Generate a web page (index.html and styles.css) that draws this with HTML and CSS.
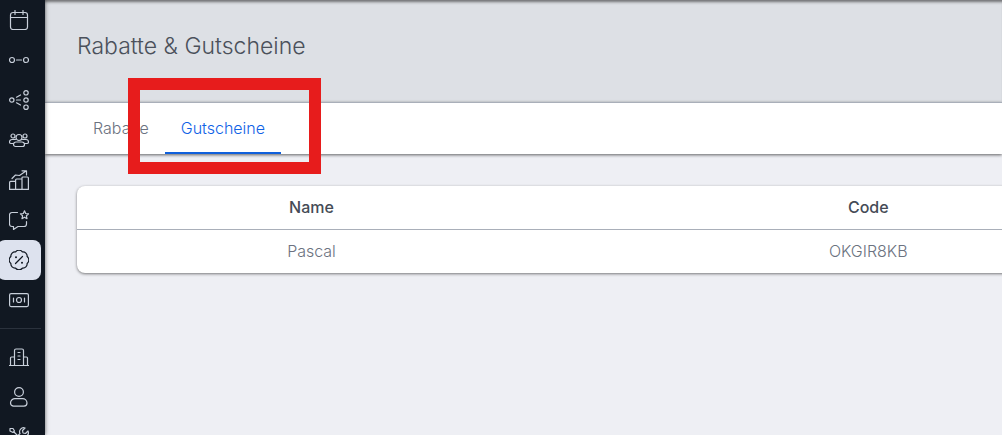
FILE: index.html
```html
<!DOCTYPE html>
<html lang="de">
<head>
  <meta charset="UTF-8">
  <meta name="viewport" content="width=device-width, initial-scale=1.0">
  <title>Rabatte &amp; Gutscheine</title>
  <link rel="stylesheet" href="styles.css">
</head>
<body>
  <!-- Sidebar -->
  <nav class="sidebar" aria-label="Navigation">
    <a class="nav-item" href="#" aria-label="Kalender">
      <svg viewBox="0 0 20 20"><rect x="1.500" y="2.500" width="17" height="17" rx="2.500"/><path d="M1.500 7.500h17M6 .5v4M14 .5v4"/></svg>
    </a>
    <a class="nav-item" href="#" aria-label="Verbindung">
      <svg viewBox="0 0 20 20"><circle cx="3" cy="10" r="2.500"/><circle cx="17" cy="10" r="2.500"/><path d="M7.500 10h5"/></svg>
    </a>
    <a class="nav-item" href="#" aria-label="Verteilung">
      <svg viewBox="0 0 20 20"><circle cx="2.800" cy="10" r="2.200"/><circle cx="17" cy="2.800" r="2.200"/><circle cx="17" cy="10" r="2.200"/><circle cx="17" cy="17.200" r="2.200"/><path d="M7.500 10h4M7.500 7.200l4-2.200M7.500 12.800l4 2.200"/></svg>
    </a>
    <a class="nav-item" href="#" aria-label="Kunden">
      <svg viewBox="0 0 20 20"><circle cx="10" cy="7.500" r="3"/><circle cx="4" cy="6" r="2"/><circle cx="16" cy="6" r="2"/><path d="M7 12h6a2.500 2.500 0 0 1 2.500 2.500c0 1-1 2-2 2h-7c-1 0-2-1-2-2A2.500 2.500 0 0 1 7 12zM6.500 9.500H3A2.500 2.500 0 0 0 .5 12c0 .8.700 1.500 1.500 1.500h2.500M13.500 9.500H17a2.500 2.500 0 0 1 2.500 2.500c0 .8-.7 1.500-1.500 1.500h-2.500"/></svg>
    </a>
    <a class="nav-item" href="#" aria-label="Statistik">
      <svg viewBox="0 0 20 20"><path d="M.6 19.400v-7c0-.5.300-1 1-1h5v8zM6.600 19.400V10c0-.6.400-1 1-1H13v10.400zM13 19.400V8c0-.6.400-1 1-1h4.400c.6 0 1 .4 1 1v11.400zM3 8.500l3.500-3.500 4 .5L17 1M13 .8h4.500V5"/></svg>
    </a>
    <a class="nav-item" href="#" aria-label="Bewertungen">
      <svg viewBox="0 0 20 20"><path d="M8.500 2.500H3A2.500 2.500 0 0 0 .5 5v9A2.500 2.500 0 0 0 3 16.500h1.500v3l4.500-3h6a2.500 2.500 0 0 0 2.500-2.500v-2.500M15.500.8l1.200 2.700 2.900.3-2.200 2 .6 2.900-2.500-1.500L13 8.700l.6-2.900-2.200-2 2.900-.3z"/></svg>
    </a>
    <a class="nav-item active" href="#" aria-label="Rabatte &amp; Gutscheine" aria-current="page">
      <svg viewBox="0 0 20 20"><path d="M13.400 1.900A4.200 4.200 0 0 1 18.100 6.600A4.200 4.200 0 0 1 18.100 13.400A4.200 4.200 0 0 1 13.400 18.100A4.200 4.200 0 0 1 6.600 18.100A4.200 4.200 0 0 1 1.900 13.400A4.200 4.200 0 0 1 1.900 6.600A4.200 4.200 0 0 1 6.600 1.900A4.200 4.200 0 0 1 13.400 1.900zM6.500 13.500l7-7"/><circle class="dot" cx="7" cy="7.200" r="1"/><circle class="dot" cx="13" cy="12.800" r="1"/></svg>
    </a>
    <a class="nav-item" href="#" aria-label="Kasse">
      <svg viewBox="0 0 20 20"><rect x=".6" y="3.600" width="18.800" height="13" rx="1.500"/><circle cx="10" cy="10" r="2.500"/><path d="M4.500 8v4M15.500 8v4"/></svg>
    </a>
    <hr class="nav-divider">
    <a class="nav-item" href="#" aria-label="Unternehmen">
      <svg viewBox="0 0 20 20"><path d="M0 18.500h20M5.500 18.500v-15c0-1 .5-1.500 1.500-1.500h6c1 0 1.500.5 1.500 1.500v15M1.500 18.500v-7.500c0-.6.400-1 1-1h3M18.500 18.500v-7.500c0-.6-.4-1-1-1h-3M9 5.500h2M9 9h2M9 12.500h2"/></svg>
    </a>
    <a class="nav-item" href="#" aria-label="Profil">
      <svg viewBox="0 0 20 20"><circle cx="10" cy="5" r="4.400"/><path d="M6.500 11.600h7a4.500 4.500 0 0 1 4.500 4.500c0 1.700-1.300 3-3 3H4.500c-1.500 0-3-1.300-3-3a4.500 4.500 0 0 1 5-4.500z"/></svg>
    </a>
    <a class="nav-item" href="#" aria-label="Werkzeuge">
      <svg viewBox="0 0 20 20"><path d="M1 1.500l3 0 1.500 2.500-1.500 1.500L1 4zM5 5l12 12M16 1a4 4 0 0 0-5 5.500L2 15.500a2 2 0 0 0 3 3l9-9A4 4 0 0 0 19 4l-2.500 2.500-2.500-.5-.5-2.500z"/></svg>
    </a>
  </nav>

  <!-- Page content -->
  <main class="content">
    <header class="page-header">
      <h1>Rabatte &amp; Gutscheine</h1>
    </header>

    <div class="tabs">
      <a class="tab" href="#">Rabatte</a>
      <a class="tab active" href="#" aria-current="page">Gutscheine</a>
      <div class="highlight"></div>
    </div>

    <section class="table-section">
      <table class="voucher-table">
        <thead>
          <tr>
            <th class="col-name">Name</th>
            <th class="col-code">Code</th>
            <td></td>
          </tr>
        </thead>
        <tbody>
          <tr>
            <td>Pascal</td>
            <td>OKGIR8KB</td>
            <td></td>
          </tr>
        </tbody>
      </table>
    </section>
  </main>
</body>
</html>
```
FILE: styles.css
```css
/* Reset and global styling */
* {
  margin: 0;
  padding: 0;
  box-sizing: border-box;
}

body {
  display: flex;
  height: 100vh;
  overflow: hidden;
  background-color: #eeeff4;
  color: #6b7280;
  font-family: Inter, "Liberation Sans", sans-serif;
  font-size: 16px;
  font-weight: 300;
  line-height: 23px;
}

/* Sidebar */
.sidebar {
  position: relative;
  z-index: 2;
  flex: 0 0 45px;
  overflow: hidden;
  background-color: #111822;
  box-shadow: 0 0 4px rgba(0, 0, 0, 0.6);
}

.nav-item {
  display: flex;
  justify-content: center;
  align-items: center;
  height: 40px;
  margin-left: -3px;
  margin-right: 4px;
  border-radius: 8px;
  color: #c8cfda;
}

.nav-item.active {
  background-color: #dde2ee;
  color: #111822;
}

.nav-item svg {
  width: 20px;
  height: 20px;
  fill: none;
  stroke: currentColor;
  stroke-width: 1.2;
  stroke-linecap: round;
  stroke-linejoin: round;
}

.nav-item .dot {
  fill: currentColor;
  stroke: none;
}

.nav-divider {
  height: 1px;
  margin: 8px 4px 8px 0;
  border: none;
  background-color: #2b323d;
}

/* Page content */
.content {
  flex: 1;
  min-width: 0;
  overflow: hidden;
}

.page-header {
  padding: 30px 32px 40px;
  background-color: #dde0e5;
  box-shadow: inset 0 4px 3px -2px rgba(0, 0, 0, 0.5);
}

h1 {
  color: #4b515b;
  font-size: 23px;
  font-weight: 300;
  line-height: 32px;
}

/* Tabs */
.tabs {
  position: relative;
  display: flex;
  padding: 0 32px;
  border-top: 1px solid #a9afb9;
  background-color: #fff;
  box-shadow: 0 1px 3px rgba(0, 0, 0, 0.6);
}

.tab {
  padding: 14px 16px 12px;
  border-bottom: 2px solid transparent;
  color: #6b7280;
  text-decoration: none;
}

.tab.active {
  border-bottom-color: #0f5fdc;
  color: #0f62e6;
}

/* Marker frame around the active tab */
.highlight {
  position: absolute;
  top: -25px;
  left: 83px;
  width: 193px;
  height: 96px;
  border: 12px solid #e71c1c;
  pointer-events: none;
}

/* Voucher table, runs past the right edge */
.table-section {
  padding: 32px 0 32px 32px;
}

.voucher-table {
  width: 130%;
  table-layout: fixed;
  border-spacing: 0;
  border-radius: 8px;
  background-color: #fff;
  box-shadow: 0 1px 3px rgba(0, 0, 0, 0.5);
  text-align: center;
}

.voucher-table th,
.voucher-table td {
  padding: 10px 16px;
}

.voucher-table th {
  color: #454b56;
  font-weight: 500;
}

.voucher-table thead th,
.voucher-table thead td {
  border-bottom: 1px solid #a9afb9;
}

.col-name {
  width: 39%;
}

.col-code {
  width: 53.6%;
}
```
